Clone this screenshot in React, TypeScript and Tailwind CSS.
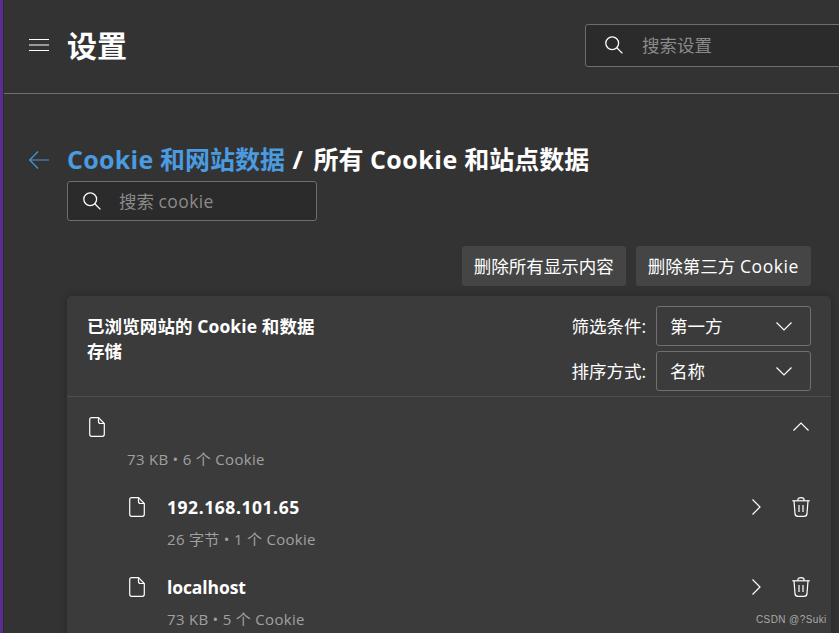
import React from "react";

const font = { fontFamily: '"Open Sans","Noto Sans CJK SC",sans-serif' };

function SearchIcon() {
  return (
    <svg width="20" height="20" viewBox="0 0 20 20" fill="none" stroke="currentColor" strokeWidth="1.3" className="shrink-0 text-white">
      <circle cx="8.2" cy="8.2" r="6.4" />
      <path d="M12.8 12.8 L18.4 18.4" />
    </svg>
  );
}

function FileIcon() {
  return (
    <svg width="16" height="20" viewBox="0 0 16 20" fill="none" stroke="currentColor" strokeWidth="1.2" className="shrink-0 text-white">
      <path d="M2.5 0.7 H9.5 L15.3 6.5 V17.3 Q15.3 19.3 13.3 19.3 H2.7 Q0.7 19.3 0.7 17.3 V2.5 Q0.7 0.7 2.5 0.7 Z" />
      <path d="M9.5 0.7 V4.5 Q9.5 6.5 11.5 6.5 H15.3" />
    </svg>
  );
}

function Chevron({ d }: { d: string }) {
  return (
    <svg width="20" height="20" viewBox="0 0 20 20" fill="none" stroke="currentColor" strokeWidth="1.2" className="shrink-0 text-white">
      <path d={d} />
    </svg>
  );
}

function TrashIcon() {
  return (
    <svg width="20" height="20" viewBox="0 0 20 20" fill="none" stroke="currentColor" strokeWidth="1.2" className="shrink-0 text-white">
      <path d="M1.3 3.8 H18.7" />
      <path d="M6.8 3.8 V3 Q6.8 0.7 10 0.7 Q13.2 0.7 13.2 3 V3.8" />
      <path d="M3 3.8 L4 16.6 Q4.2 19.3 7 19.3 H13 Q15.8 19.3 16 16.6 L17 3.8" />
      <path d="M8 8 V15 M12 8 V15" />
    </svg>
  );
}

function Select({ value }: { value: string }) {
  return (
    <div className="flex h-10 w-[155px] items-center justify-between rounded-[3px] border border-[#707070] pl-[13px] pr-[16px] text-[17.5px] text-white">
      <span>{value}</span>
      <Chevron d="M2.5 6.5 L10 14 L17.5 6.5" />
    </div>
  );
}

function Meta({ children }: { children: React.ReactNode }) {
  return <div className="text-[15px] leading-[24px] tracking-[0.3px] text-[#a0a0a0]">{children}</div>;
}

function Site({ name, meta, nameClass }: { name: string; meta: string; nameClass: string }) {
  return (
    <div className="h-20 pl-[62px] pr-[20px]">
      <div className="flex h-10 items-center">
        <FileIcon />
        <span className={`ml-[22px] text-[17.5px] font-bold text-white ${nameClass}`}>{name}</span>
        <div className="ml-auto flex items-center gap-[24px]">
          <Chevron d="M5.5 2.5 L13 10 L5.5 17.5" />
          <TrashIcon />
        </div>
      </div>
      <div className="ml-[38px]">
        <Meta>{meta}</Meta>
      </div>
    </div>
  );
}

export default function App() {
  return (
    <div className="relative flex h-[633px] w-[839px] overflow-hidden bg-[#333333]" style={font}>
      <div className="w-[3px] shrink-0 bg-[#5c2d91]" />
      <div className="w-px shrink-0 bg-[#2a2a2a]" />
      <div className="flex min-w-0 flex-1 flex-col">
        <header className="flex h-[94px] shrink-0 items-center border-b border-[#6e6e6e] pb-[3px] pl-[25px]">
          <svg width="20" height="12" viewBox="0 0 20 12" stroke="currentColor" strokeWidth="1" className="shrink-0 text-white">
            <path d="M0 .5 H20 M0 6 H20 M0 11.5 H20" />
          </svg>
          <h1 className="ml-[18px] text-[30px] font-bold whitespace-nowrap text-white">设置</h1>
          <div className="ml-[458px] flex h-[43px] w-[290px] shrink-0 items-center rounded-[3px] border border-[#6e6e6e] bg-[#2b2b2b] pl-[18px]">
            <SearchIcon />
            <span className="ml-[18px] text-[17.5px] text-[#8a8a8a]">搜索设置</span>
          </div>
        </header>

        <main className="pl-[25px] pr-[8px]">
          <div className="mt-[48px] flex h-[36px] items-center">
            <svg width="20" height="20" viewBox="0 0 20 20" fill="none" stroke="#4a93d6" strokeWidth="1.2" className="shrink-0">
              <path d="M0.7 10 H20 M9 1.5 L0.7 10 L9 18.5" />
            </svg>
            <h2 className="ml-[18px] text-[25px] font-bold whitespace-nowrap text-white">
              <span className="text-[#4a9be0]">
                <span className="tracking-[0.3px]">Cookie</span> 和网站数据
              </span>
              <span className="mr-[4px] ml-[1px]"> / </span>所有 <span className="tracking-[0.5px]">Cookie</span> 和站点数据
            </h2>
          </div>

          <div className="mt-[3px] ml-[38px] flex h-10 w-[250px] items-center rounded-[3px] border border-[#6e6e6e] bg-[#2b2b2b] pl-[14px]">
            <SearchIcon />
            <span className="ml-[17px] text-[17.5px] text-[#8a8a8a]">
              搜索 <span className="tracking-[0.4px]">cookie</span>
            </span>
          </div>

          <div className="mt-[25px] mr-[20px] flex justify-end gap-[10px]">
            <button className="h-10 rounded-[3px] bg-[#454545] px-[12px] text-[17.5px] text-white">删除所有显示内容</button>
            <button className="h-10 rounded-[3px] bg-[#454545] px-[12px] text-[17.5px] text-white">
              删除第三方 <span className="tracking-[0.6px]">Cookie</span>
            </button>
          </div>

          <section className="mt-[10px] ml-[38px] rounded-t-[5px] bg-[#3b3b3b] shadow-[0_0_8px_rgba(0,0,0,0.25)]">
            <div className="flex h-[101px] justify-between border-b border-[#4f4f4f] pt-[10px] pr-[20px] pl-[20px]">
              <div className="mt-[8px] w-[240px] text-[17.5px] leading-[25px] font-bold tracking-[0.1px] text-white">
                已浏览网站的 Cookie 和数据存储
              </div>
              <div className="flex flex-col gap-[5px]">
                <div className="flex items-center gap-[10px]">
                  <span className="text-[17.5px] text-white">筛选条件:</span>
                  <Select value="第一方" />
                </div>
                <div className="flex items-center gap-[10px]">
                  <span className="text-[17.5px] text-white">排序方式:</span>
                  <Select value="名称" />
                </div>
              </div>
            </div>
            <div className="h-[90px] pr-[20px] pl-[22px]">
              <div className="flex h-[60px] items-center">
                <FileIcon />
                <div className="ml-auto">
                  <Chevron d="M2.5 13.5 L10 6 L17.5 13.5" />
                </div>
              </div>
              <div className="-mt-[10px] ml-[38px]">
                <Meta>73 KB • 6 个 Cookie</Meta>
              </div>
            </div>
            <Site name="192.168.101.65" meta="26 字节 • 1 个 Cookie" nameClass="tracking-[0.55px]" />
            <Site name="localhost" meta="73 KB • 5 个 Cookie" nameClass="tracking-[-0.1px]" />
          </section>
        </main>
      </div>
      <div className="absolute top-[612px] left-[756px] text-[10px] tracking-[0.4px] text-[#a8a8a8]" style={{ fontFamily: '"Liberation Sans",sans-serif' }}>
        CSDN @?Suki
      </div>
    </div>
  );
}
